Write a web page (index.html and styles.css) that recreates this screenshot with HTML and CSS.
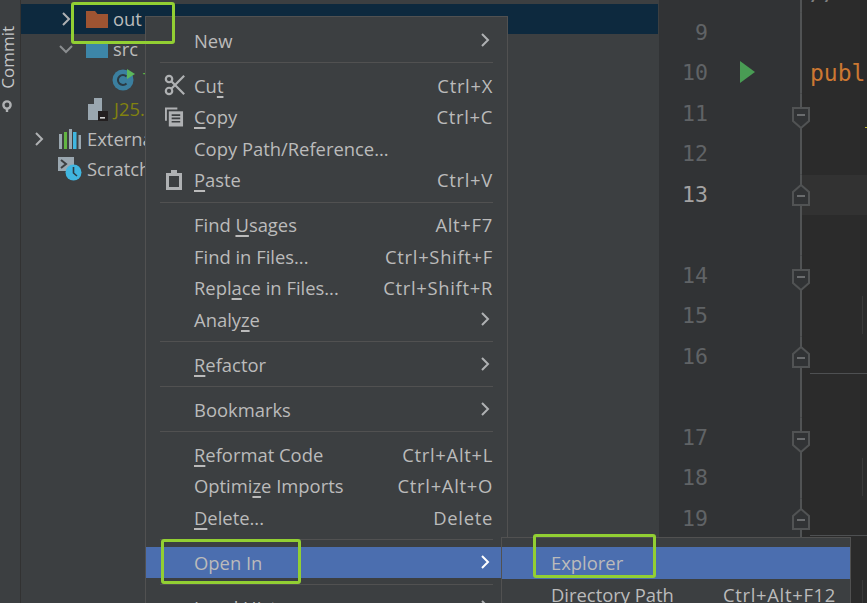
FILE: index.html
```
<!DOCTYPE html>
<html lang="en">
<head>
<meta charset="utf-8">
<title>IDE context menu</title>
<link rel="stylesheet" href="styles.css">
</head>
<body>
<svg class="defs" width="0" height="0" aria-hidden="true">
  <symbol id="fold-start" viewBox="0 0 18 22"><path d="M1 1H17V14L9 21L1 14Z" fill="#313335" stroke="#515354" stroke-width="2"/><path d="M5 8H13" stroke="#6a6c6e" stroke-width="2"/></symbol>
  <symbol id="fold-end" viewBox="0 0 18 22"><path d="M1 21H17V8L9 1L1 8Z" fill="#313335" stroke="#515354" stroke-width="2"/><path d="M5 12H13" stroke="#6a6c6e" stroke-width="2"/></symbol>
  <symbol id="chev" viewBox="0 0 10 16"><path d="M2 2L8 8L2 14" fill="none" stroke="currentColor" stroke-width="2"/></symbol>
</svg>
<div class="ide">
  <aside class="strip">
    <div class="strip-tab">
      <span class="strip-label">Commit</span>
      <svg class="strip-icon" width="14" height="12" viewBox="0 0 14 12"><circle cx="7" cy="5" r="3.600" fill="none" stroke="#afb1b3" stroke-width="2.400"/><path d="M7 9V12" stroke="#afb1b3" stroke-width="2.400"/></svg>
    </div>
  </aside>
  <section class="project">
    <div class="tree-row selected lvl-1">
      <svg class="chev" width="10" height="16"><use href="#chev"/></svg>
      <svg class="node" width="22" height="18" viewBox="0 0 22 18"><path d="M0 1H9L11.5 4H22V18H0Z" fill="#9e5432"/></svg>
      <span class="name">out</span>
    </div>
    <div class="tree-row lvl-1">
      <svg class="chev-open" width="16" height="10" viewBox="0 0 16 10"><path d="M2 2L8 8L14 2" fill="none" stroke="#8a8d8f" stroke-width="2"/></svg>
      <svg class="node" width="22" height="18" viewBox="0 0 22 18"><path d="M0 1H9L11.5 3H22V18H0Z" fill="#3d86a8"/></svg>
      <span class="name">src</span>
    </div>
    <div class="tree-row lvl-2">
      <svg class="node" width="26" height="24" viewBox="0 0 26 24"><circle cx="11" cy="13" r="10.5" fill="#3b7f9f"/><path d="M14.5 9.5A5 5 0 1 0 14.5 16.5" fill="none" stroke="#2b3b44" stroke-width="2"/><path d="M15 2L23 7L15 12Z" fill="#5cb85c"/></svg>
      <span class="name c-green">Test</span>
    </div>
    <div class="tree-row lvl-3">
      <svg class="node" width="22" height="24" viewBox="0 0 22 24"><path d="M7 1H15V14H20V23H1V7H7Z" fill="#9aa7b0"/><path d="M7 1V7H1Z" fill="#3c3f41"/><rect x="11" y="14" width="10" height="10" fill="#231f20"/><rect x="13" y="20" width="5" height="1.6" fill="#d0d0d0"/></svg>
      <span class="name c-olive">J25.iml</span>
    </div>
    <div class="tree-row lvl-0">
      <svg class="chev" width="10" height="16"><use href="#chev"/></svg>
      <svg class="node libs" width="22" height="20" viewBox="0 0 22 20"><rect x="0" y="5" width="3" height="15" fill="#9aa7b0"/><rect x="5" y="3" width="3" height="17" fill="#62b543"/><rect x="10" y="0" width="3" height="20" fill="#9aa7b0"/><rect x="14" y="3" width="3.5" height="17" fill="#40b6e0"/><rect x="19.5" y="6" width="2.5" height="14" fill="#9aa7b0"/></svg>
      <span class="name">External Libraries</span>
    </div>
    <div class="tree-row lvl-0b">
      <svg class="node" width="24" height="24" viewBox="0 0 24 24"><path d="M0 0H16V14H0Z" fill="#9aa7b0"/><path d="M3 3L8 7L3 11" fill="none" stroke="#3c3f41" stroke-width="2"/><circle cx="15.500" cy="15.500" r="8" fill="#40b6e0"/><path d="M15.500 10V16L19 19" fill="none" stroke="#2b3b44" stroke-width="1.600"/></svg>
      <span class="name">Scratches and Consoles</span>
    </div>
  </section>
  <main class="editor">
    <div class="line line-top"><span class="num"></span><span class="mark"></span><span class="fold"></span><span class="code comment">//*..</span></div>
    <div class="line"><span class="num">9</span><span class="mark"></span><span class="fold"></span><span class="code"></span></div>
    <div class="line"><span class="num">10</span><span class="mark"><svg class="run" width="16" height="22" viewBox="0 0 16 22"><path d="M0 0L15 11L0 22Z" fill="#499c54"/></svg></span><span class="fold"></span><span class="code keyword">public</span></div>
    <div class="line"><span class="num">11</span><span class="mark"></span><span class="fold"><svg class="fs" width="18" height="22"><use href="#fold-start"/></svg></span><span class="code"><i class="tick"></i></span></div>
    <div class="line"><span class="num">12</span><span class="mark"></span><span class="fold"></span><span class="code"></span></div>
    <div class="line current"><span class="num cur">13</span><span class="mark"></span><span class="fold"><svg width="18" height="22"><use href="#fold-end"/></svg></span><span class="code"></span></div>
    <div class="line"><span class="num"></span><span class="mark"></span><span class="fold"></span><span class="code"></span></div>
    <div class="line"><span class="num">14</span><span class="mark"></span><span class="fold"><svg class="fs" width="18" height="22"><use href="#fold-start"/></svg></span><span class="code"></span></div>
    <div class="line"><span class="num">15</span><span class="mark"></span><span class="fold"></span><span class="code"><i class="guide"></i></span></div>
    <div class="line"><span class="num">16</span><span class="mark"></span><span class="fold"><svg width="18" height="22"><use href="#fold-end"/></svg></span><span class="code rule"></span></div>
    <div class="line"><span class="num"></span><span class="mark"></span><span class="fold"></span><span class="code"></span></div>
    <div class="line"><span class="num">17</span><span class="mark"></span><span class="fold"><svg class="fs" width="18" height="22"><use href="#fold-start"/></svg></span><span class="code"></span></div>
    <div class="line"><span class="num">18</span><span class="mark"></span><span class="fold"></span><span class="code"><i class="guide"></i></span></div>
    <div class="line"><span class="num">19</span><span class="mark"></span><span class="fold"><svg width="18" height="22"><use href="#fold-end"/></svg></span><span class="code rule"></span></div>
    <div class="line"><span class="num"></span><span class="mark"></span><span class="fold"></span><span class="code"></span></div>
    <div class="line"><span class="num">20</span><span class="mark"></span><span class="fold"></span><span class="code"><i class="guide"></i></span></div>
  </main>
</div>

<nav class="menu main-menu">
  <div class="item"><span class="ico"></span><span class="label">New</span><svg class="arrow" width="10" height="16"><use href="#chev"/></svg></div>
  <hr>
  <div class="item"><span class="ico"><svg width="22" height="22" viewBox="0 0 24 24" fill="none" stroke="#afb1b3" stroke-width="2.400"><circle cx="5.500" cy="5.500" r="3.500"/><circle cx="5.500" cy="18.500" r="3.500"/><path d="M8 8L22 22M8 16L22 2"/></svg></span><span class="label">Cu<u>t</u></span><span class="key">Ctrl+X</span></div>
  <div class="item"><span class="ico"><svg class="ico-copy" width="19" height="20" viewBox="0 0 20 20"><path d="M0 0H13V2H2V14H0Z" fill="#afb1b3"/><path d="M4 4H19V20H4Z" fill="#afb1b3"/><path d="M7 8H16M7 11.500H16M7 15H16" stroke="#3c3f41" stroke-width="1.800"/></svg></span><span class="label"><u>C</u>opy</span><span class="key">Ctrl+C</span></div>
  <div class="item"><span class="ico"></span><span class="label">Copy Path/Reference...</span></div>
  <div class="item"><span class="ico"><svg class="ico-paste" width="16" height="20" viewBox="0 0 16 20"><path d="M0 3H5V0H11V3H16V20H0Z" fill="#afb1b3"/><path d="M3 6H13V17H3Z" fill="#3c3f41"/></svg></span><span class="label"><u>P</u>aste</span><span class="key">Ctrl+V</span></div>
  <hr>
  <div class="item"><span class="ico"></span><span class="label">Find <u>U</u>sages</span><span class="key">Alt+F7</span></div>
  <div class="item"><span class="ico"></span><span class="label">Find in Files...</span><span class="key">Ctrl+Shift+F</span></div>
  <div class="item"><span class="ico"></span><span class="label">Repl<u>a</u>ce in Files...</span><span class="key">Ctrl+Shift+R</span></div>
  <div class="item"><span class="ico"></span><span class="label">Analy<u>z</u>e</span><svg class="arrow" width="10" height="16"><use href="#chev"/></svg></div>
  <hr>
  <div class="item"><span class="ico"></span><span class="label"><u>R</u>efactor</span><svg class="arrow" width="10" height="16"><use href="#chev"/></svg></div>
  <hr>
  <div class="item"><span class="ico"></span><span class="label">Bookmarks</span><svg class="arrow" width="10" height="16"><use href="#chev"/></svg></div>
  <hr>
  <div class="item"><span class="ico"></span><span class="label"><u>R</u>eformat Code</span><span class="key">Ctrl+Alt+L</span></div>
  <div class="item"><span class="ico"></span><span class="label">Optimi<u>z</u>e Imports</span><span class="key">Ctrl+Alt+O</span></div>
  <div class="item"><span class="ico"></span><span class="label"><u>D</u>elete...</span><span class="key">Delete</span></div>
  <hr>
  <div class="item active"><span class="ico"></span><span class="label">Open In</span><svg class="arrow" width="10" height="16"><use href="#chev"/></svg></div>
  <hr>
  <div class="item"><span class="ico"></span><span class="label">Local History</span><svg class="arrow" width="10" height="16"><use href="#chev"/></svg></div>
</nav>

<nav class="menu sub-menu">
  <div class="item active"><span class="label">Explorer</span></div>
  <div class="item"><span class="label">Directory <u>P</u>ath</span><span class="key">Ctrl+Alt+F12</span></div>
</nav>

<div class="callout c1"></div>
<div class="callout c2"></div>
<div class="callout c3"></div>
</body>
</html>
```
FILE: styles.css
```
html, body {
  margin: 0;
  height: 603px;
  overflow: hidden;
  background: #3c3f41;
}
body {
  position: relative;
  width: 867px;
  font-family: "Open Sans", "Liberation Sans", sans-serif;
  font-size: 18.400px;
  color: #bbbbbb;
}
.defs { position: absolute; }

.ide {
  display: flex;
  height: 603px;
}

/* Left tool strip */
.strip {
  width: 20px;
  flex: none;
  background: #3c3f41;
  border-right: 1px solid #323232;
}
.strip-tab {
  display: flex;
  flex-direction: column;
  align-items: flex-start;
  padding-top: 26px;
  gap: 11px;
}
.strip-label {
  writing-mode: vertical-rl;
  transform: rotate(180deg);
  font-size: 17px;
  line-height: 15px;
  color: #c4c6c8;
}

/* Project tree */
.project {
  width: 638px;
  flex: none;
  padding-top: 4px;
  background: #3c3f41;
}
.tree-row {
  height: 30px;
  display: flex;
  align-items: center;
  white-space: nowrap;
  color: #bbbbbb;
}
.name { margin-top: -2px; }
.selected { background: #0d293e; margin-right: 1px; }
.lvl-0 { padding-left: 13px; }
.lvl-0b { padding-left: 37px; }
.lvl-1 { padding-left: 40px; }
.lvl-2 { padding-left: 91px; }
.lvl-3 { padding-left: 66px; }
.chev { color: #afb1b3; margin-right: 15px; flex: none; }
.chev-open { margin-left: -3px; margin-right: 12px; flex: none; }
.node { margin-right: 5px; flex: none; }
.libs { margin-right: 6px; }
.c-green { color: #62b543; }
.c-olive { color: #82820f; }

/* Editor */
.editor {
  flex: 1;
  min-width: 0;
  font-family: "DejaVu Sans Mono", monospace;
  font-size: 21.500px;
}
.line {
  display: flex;
  height: 40.500px;
  background: linear-gradient(to right, #313335 142px, #2b2b2b 142px);
}
.line.current {
  background: linear-gradient(to right, #313335 142px, #323232 142px);
}
.line-top {
  height: 12.750px;
  overflow: hidden;
  align-items: flex-end;
}
.num {
  width: 49px;
  flex: none;
  text-align: right;
  line-height: 40.500px;
  color: #606366;
}
.num.cur { color: #a4a3a3; }
.mark {
  width: 84px;
  flex: none;
  display: flex;
  align-items: center;
  padding-left: 32px;
  box-sizing: border-box;
}
.run { margin-top: -3px; }
.fold {
  width: 18px;
  flex: none;
  align-self: stretch;
  display: flex;
  align-items: center;
  background: linear-gradient(#515354, #515354) center / 2px 100% no-repeat;
}
.fs { margin-top: 7px; }
.code {
  flex: 1;
  min-width: 0;
  font-size: 23px;
  line-height: 40.500px;
  white-space: nowrap;
  overflow: hidden;
}
.comment { color: #808080; }
.keyword { color: #cc7832; }
.rule::after {
  content: "";
  display: block;
  height: 1.500px;
  background: #4e5052;
  margin-top: 36px;
}
.guide {
  display: block;
  width: 1px;
  height: 38px;
  margin: 0 0 0 52px;
  background: #3a3a3a;
}
.tick {
  display: block;
  width: 3px;
  height: 1px;
  margin: 33px 0 0 55px;
  background: #bbb529;
}

/* Context menus */
.menu {
  position: absolute;
  box-sizing: border-box;
  background: #3c3f41;
  border: 1px solid #515151;
  overflow: hidden;
}
.main-menu {
  left: 145px;
  top: 16px;
  width: 363px;
  height: 620px;
  padding-top: 7.600px;
}
.sub-menu {
  left: 501px;
  top: 537px;
  width: 350px;
  height: 90px;
  padding-top: 9px;
}
.item {
  display: flex;
  align-items: center;
  height: 31.500px;
  padding-left: 18px;
  padding-right: 14px;
  white-space: nowrap;
}
.sub-menu .item { padding-left: 49px; }
.item.active {
  background: #4b6eaf;
}
.ico {
  width: 30px;
  flex: none;
  display: flex;
  align-items: center;
}
.ico-copy { margin-left: 1px; }
.ico-paste { margin-left: 2px; }
.label { flex: 1; }
.key { flex: none; letter-spacing: 0.700px; }
.arrow { flex: none; margin-right: 3px; color: #afb1b3; }
.active .arrow { color: #ffffff; }
u {
  text-decoration-thickness: 2px;
  text-underline-offset: 3px;
}
hr {
  margin: 6px 14px 6.500px 14px;
  height: 1px;
  border: 0;
  background: #515151;
}

/* Green annotations */
.callout {
  position: absolute;
  box-sizing: border-box;
  border: 3px solid #92cf33;
  border-radius: 3px;
}
.c1 { left: 71px; top: 2px; width: 104px; height: 42px; }
.c2 { left: 161px; top: 539px; width: 140px; height: 45px; }
.c3 { left: 533px; top: 534px; width: 123px; height: 44px; }
```
